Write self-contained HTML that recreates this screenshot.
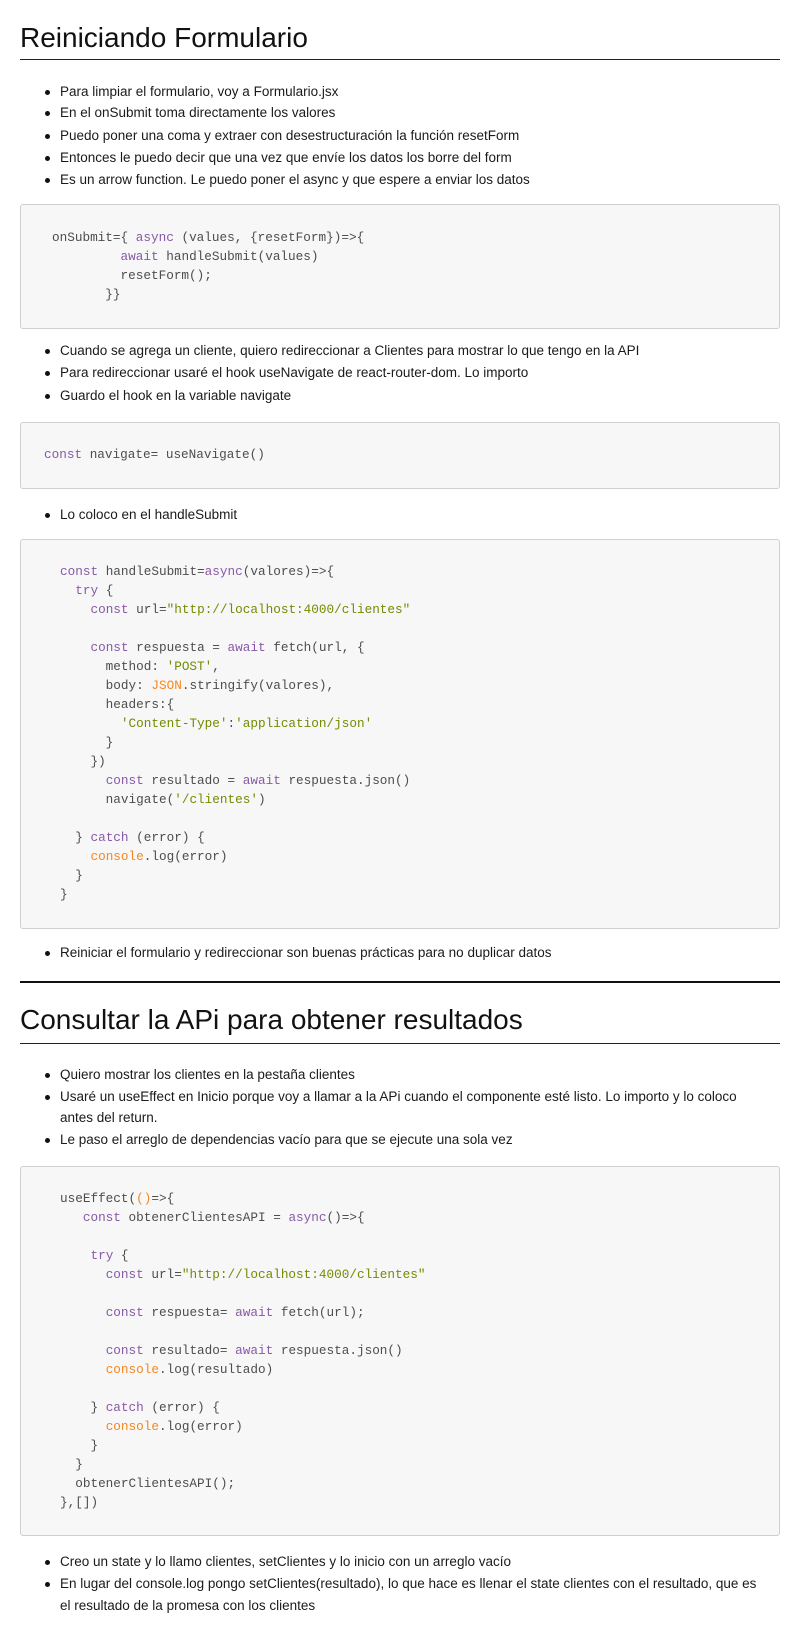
<!DOCTYPE html>
<html><head><meta charset="utf-8">
<style>
body{margin:0;background:#fff;width:800px;height:1630px;position:relative;overflow:hidden;font-family:"Liberation Sans",sans-serif;color:#1a1a1a}
.a{position:absolute}
.h{font-size:28px;line-height:34px;left:20px;color:#111}
.ul{left:20px;width:760px;height:1px;background:#222}
.li{left:60px;font-size:13.5px;line-height:22px;white-space:nowrap}
.li:before{content:"";position:absolute;left:-15px;top:9px;width:5px;height:5px;border-radius:50%;background:#111}
.blk{left:20px;width:758px;background:#f7f7f7;border:1px solid #d0d0d0;border-radius:3px}
pre{position:absolute;margin:0;font-family:"Liberation Mono",monospace;font-size:12.7px;line-height:19px;color:#4d4d4c}
.k{color:#8959a8}.s{color:#718c00}.o{color:#f5871f}
</style></head><body>
<div class="a h" style="top:21px">Reiniciando Formulario</div>
<div class="a ul" style="top:59px"></div>
<div class="a li" style="top:81px">Para limpiar el formulario, voy a Formulario.jsx</div>
<div class="a li" style="top:102px">En el onSubmit toma directamente los valores</div>
<div class="a li" style="top:125px">Puedo poner una coma y extraer con desestructuración la función resetForm</div>
<div class="a li" style="top:147px">Entonces le puedo decir que una vez que envíe los datos los borre del form</div>
<div class="a li" style="top:169px">Es un arrow function. Le puedo poner el async y que espere a enviar los datos</div>

<div class="a blk" style="top:204px;height:123px"></div>
<pre style="top:228px;left:52px">onSubmit={ <span class="k">async</span> (values, {resetForm})=>{
         <span class="k">await</span> handleSubmit(values)
         resetForm();
       }}</pre>

<div class="a li" style="top:340px">Cuando se agrega un cliente, quiero redireccionar a Clientes para mostrar lo que tengo en la API</div>
<div class="a li" style="top:362px">Para redireccionar usaré el hook useNavigate de react-router-dom. Lo importo</div>
<div class="a li" style="top:385px">Guardo el hook en la variable navigate</div>

<div class="a blk" style="top:422px;height:65px"></div>
<pre style="top:445px;left:44px"><span class="k">const</span> navigate= useNavigate()</pre>

<div class="a li" style="top:504px">Lo coloco en el handleSubmit</div>

<div class="a blk" style="top:539px;height:388px"></div>
<pre style="top:562px;left:60px"><span class="k">const</span> handleSubmit=<span class="k">async</span>(valores)=>{
  <span class="k">try</span> {
    <span class="k">const</span> url=<span class="s">"http://localhost:4000/clientes"</span>

    <span class="k">const</span> respuesta = <span class="k">await</span> fetch(url, {
      method: <span class="s">'POST'</span>,
      body: <span class="o">JSON</span>.stringify(valores),
      headers:{
        <span class="s">'Content-Type'</span>:<span class="s">'application/json'</span>
      }
    })
      <span class="k">const</span> resultado = <span class="k">await</span> respuesta.json()
      navigate(<span class="s">'/clientes'</span>)

  } <span class="k">catch</span> (error) {
    <span class="o">console</span>.log(error)
  }
}</pre>

<div class="a li" style="top:942px">Reiniciar el formulario y redireccionar son buenas prácticas para no duplicar datos</div>
<div class="a" style="left:20px;width:760px;height:2px;background:#111;top:981px"></div>

<div class="a h" style="top:1003px">Consultar la APi para obtener resultados</div>
<div class="a ul" style="top:1043px"></div>
<div class="a li" style="top:1064px">Quiero mostrar los clientes en la pestaña clientes</div>
<div class="a li" style="top:1086px">Usaré un useEffect en Inicio porque voy a llamar a la APi cuando el componente esté listo. Lo importo y lo coloco</div>
<div class="a" style="left:60px;top:1107px;font-size:13.5px;line-height:22px">antes del return.</div>
<div class="a li" style="top:1129px">Le paso el arreglo de dependencias vacío para que se ejecute una sola vez</div>

<div class="a blk" style="top:1166px;height:368px"></div>
<pre style="top:1189px;left:60px">useEffect(<span class="o">()</span>=>{
   <span class="k">const</span> obtenerClientesAPI = <span class="k">async</span>()=>{

    <span class="k">try</span> {
      <span class="k">const</span> url=<span class="s">"http://localhost:4000/clientes"</span>

      <span class="k">const</span> respuesta= <span class="k">await</span> fetch(url);

      <span class="k">const</span> resultado= <span class="k">await</span> respuesta.json()
      <span class="o">console</span>.log(resultado)

    } <span class="k">catch</span> (error) {
      <span class="o">console</span>.log(error)
    }
  }
  obtenerClientesAPI();
},[])</pre>

<div class="a li" style="top:1551px">Creo un state y lo llamo clientes, setClientes y lo inicio con un arreglo vacío</div>
<div class="a li" style="top:1573px">En lugar del console.log pongo setClientes(resultado), lo que hace es llenar el state clientes con el resultado, que es</div>
<div class="a" style="left:60px;top:1595px;font-size:13.5px;line-height:22px">el resultado de la promesa con los clientes</div>
</body></html>
